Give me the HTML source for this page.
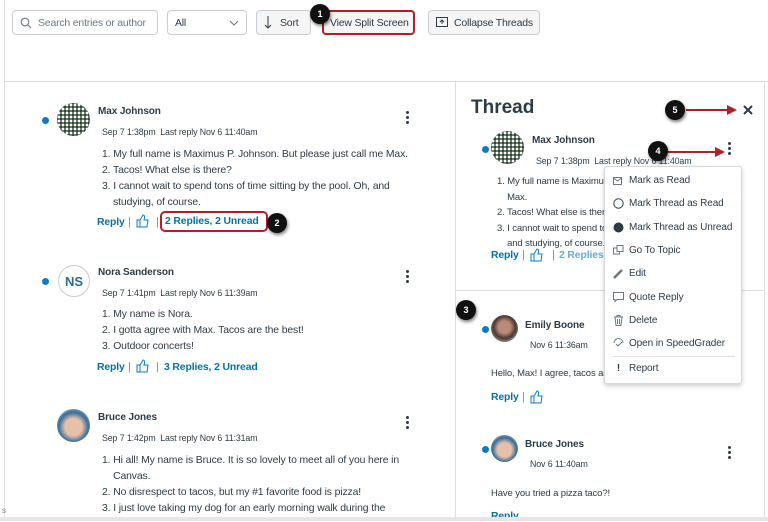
<!DOCTYPE html>
<html><head><meta charset="utf-8"><style>
*{box-sizing:border-box;margin:0;padding:0}
body{width:768px;height:521px;position:relative;overflow:hidden;background:#fff;font-family:"Liberation Sans",sans-serif;color:#2d3b45}
.a{position:absolute;white-space:nowrap}
.btn{position:absolute;top:10px;height:25px;border:1px solid #c7cdd1;border-radius:4px;background:#f5f5f5;font-size:10.5px;letter-spacing:-0.2px;color:#2d3b45;display:flex;align-items:center;padding:0 7px;white-space:nowrap;overflow:hidden}
.btn svg{flex-shrink:0}
.name{font-size:10px;font-weight:bold;color:#2d3b45;letter-spacing:-0.1px}
.date{font-size:8.8px;color:#2d3b45;letter-spacing:-0.1px}
.body{font-size:10.4px;line-height:16px;color:#2d3b45;letter-spacing:-0.12px}
.link{font-size:10.4px;font-weight:bold;color:#0770a3;letter-spacing:-0.12px}
.dot{position:absolute;width:7px;height:7px;border-radius:50%;background:#0b7bc5}
.kebab{position:absolute;width:3px}
.kebab i{display:block;width:3px;height:3px;border-radius:50%;background:#2d3b45;margin-bottom:2px}
.badge{position:absolute;width:20px;height:20px;border-radius:50%;background:#111;color:#fff;font-size:9px;font-weight:bold;display:flex;align-items:center;justify-content:center;box-shadow:1px 2px 3px rgba(0,0,0,.5);z-index:3}
.av{position:absolute;border-radius:50%}
.mi{position:absolute;left:8px;font-size:10px;letter-spacing:-0.1px;color:#2d3b45;display:flex;align-items:center;gap:5px;white-space:nowrap}
.mi svg{width:11px;height:11px;flex-shrink:0}
</style></head><body>
<div class="a" style="left:4px;top:0;width:1px;height:521px;background:#ddd"></div>
<div class="a" style="left:5px;top:81px;width:763px;height:1px;background:#ddd"></div>
<div class="a" style="left:455px;top:82px;width:1px;height:436px;background:#ddd"></div>
<div class="a" style="left:764px;top:82px;width:1px;height:436px;background:#ddd"></div>
<div class="a" style="left:456px;top:290px;width:308px;height:1px;background:#ddd"></div>

<div class="btn" style="left:12px;width:146px;background:#fff;color:#6b7780"><svg width="12" height="12" viewBox="0 0 12 12" style="margin-right:6px"><circle cx="5" cy="5" r="3.8" fill="none" stroke="#6b7780" stroke-width="1.1"/><path d="M8 8l3 3" stroke="#6b7780" stroke-width="1.1"/></svg>Search entries or author</div>
<div class="btn" style="left:167px;width:80px;background:#fff;justify-content:space-between">All<svg width="10" height="6" viewBox="0 0 10 6"><path d="M1 1l4 4 4-4" fill="none" stroke="#6b7780"/></svg></div>
<div class="btn" style="left:256px;width:55px"><svg width="8" height="13" viewBox="0 0 8 13" style="margin-right:8px"><path d="M4 0v12M1 9l3 3 3-3" fill="none" stroke="#2d3b45"/></svg>Sort</div>
<div class="btn" style="left:322px;width:93px;border:2px solid #b0202b;padding:0 0 0 6px">View Split Screen</div>
<div class="btn" style="left:428px;width:112px"><svg width="12" height="11" viewBox="0 0 12 11" style="margin-right:6px"><rect x="0.5" y="0.5" width="11" height="9" fill="none" stroke="#2d3b45"/><path d="M6 7V3M4 5l2-2 2 2" fill="none" stroke="#2d3b45"/></svg>Collapse Threads</div>
<div class="badge" style="left:310px;top:4px">1</div>

<div class="dot" style="left:42px;top:117px"></div>
<div class="av" style="left:57px;top:103px;width:33px;height:33px;background:radial-gradient(circle,#fff 1.2px,#2f4a34 1.6px) 0 0/4px 4px"></div>
<div class="a name" style="left:98px;top:106px">Max Johnson</div>
<div class="kebab" style="left:406px;top:111px"><i></i><i></i><i></i></div>
<div class="a date" style="left:102px;top:127px">Sep 7 1:38pm&nbsp; Last reply Nov 6 11:40am</div>
<div class="a body" style="left:102px;top:147px">1. My full name is Maximus P. Johnson. But please just call me Max.<br>2. Tacos! What else is there?<br>3. I cannot wait to spend tons of time sitting by the pool. Oh, and<br>&nbsp;&nbsp;&nbsp;&nbsp;studying, of course.</div>
<div class="a link" style="left:97px;top:217px">Reply</div>
<div class="a" style="left:128px;top:216px;font-size:11px;color:#888">|</div>
<svg class="a" style="left:136px;top:214px" width="13" height="14" viewBox="0 0 13 14"><path d="M1 6h3v7H1zM4 6l3-5c1 0 2 1 1.5 3L8 6h4l-1 7H4" fill="none" stroke="#0b7bc5"/></svg>
<div class="a" style="left:156px;top:216px;font-size:11px;color:#888">|</div>
<div class="a link" style="left:160px;top:211px;width:108px;height:21px;border:2px solid #b0202b;border-radius:5px;padding:3px 0 0 3px">2 Replies, 2 Unread</div>
<div class="badge" style="left:267px;top:213px">2</div>

<div class="dot" style="left:42px;top:278px"></div>
<div class="av" style="left:58px;top:265px;width:32px;height:32px;border:1px solid #c7cdd1;background:#fff;color:#2d6b9a;font-weight:bold;font-size:13px;display:flex;align-items:center;justify-content:center">NS</div>
<div class="a name" style="left:98px;top:267px">Nora Sanderson</div>
<div class="kebab" style="left:406px;top:270px"><i></i><i></i><i></i></div>
<div class="a date" style="left:102px;top:288px">Sep 7 1:41pm&nbsp; Last reply Nov 6 11:39am</div>
<div class="a body" style="left:102px;top:307px">1. My name is Nora.<br>2. I gotta agree with Max. Tacos are the best!<br>3. Outdoor concerts!</div>
<div class="a link" style="left:97px;top:362px">Reply</div>
<div class="a" style="left:128px;top:361px;font-size:11px;color:#888">|</div>
<svg class="a" style="left:136px;top:359px" width="13" height="14" viewBox="0 0 13 14"><path d="M1 6h3v7H1zM4 6l3-5c1 0 2 1 1.5 3L8 6h4l-1 7H4" fill="none" stroke="#0b7bc5"/></svg>
<div class="a" style="left:156px;top:361px;font-size:11px;color:#888">|</div>
<div class="a link" style="left:164px;top:362px">3 Replies, 2 Unread</div>

<div class="av" style="left:57px;top:409px;width:33px;height:33px;background:radial-gradient(circle at 50% 55%,#e7c0a8 35%,#3a6f9a 60%,#cfd8de)"></div>
<div class="a name" style="left:98px;top:412px">Bruce Jones</div>
<div class="kebab" style="left:406px;top:416px"><i></i><i></i><i></i></div>
<div class="a date" style="left:102px;top:433px">Sep 7 1:42pm&nbsp; Last reply Nov 6 11:31am</div>
<div class="a body" style="left:102px;top:453px">1. Hi all! My name is Bruce. It is so lovely to meet all of you here in<br>&nbsp;&nbsp;&nbsp;&nbsp;Canvas.<br>2. No disrespect to tacos, but my #1 favorite food is pizza!<br>3. I just love taking my dog for an early morning walk during the</div>

<div class="a" style="left:471px;top:97px;font-size:19px;font-weight:bold;color:#2d3b45">Thread</div>
<div class="badge" style="left:665px;top:100px">5</div>
<div class="a" style="left:686px;top:109px;width:44px;height:2px;background:#b0202b"></div>
<svg class="a" style="left:727px;top:105px" width="10" height="10"><path d="M0 0L10 5 0 10z" fill="#b0202b"/></svg>
<svg class="a" style="left:743px;top:105px" width="10" height="10"><path d="M1 1l8 8M9 1l-8 8" stroke="#2d3b45" stroke-width="2"/></svg>

<div class="dot" style="left:482px;top:146px"></div>
<div class="av" style="left:491px;top:131px;width:33px;height:33px;background:radial-gradient(circle,#fff 1.2px,#2f4a34 1.6px) 0 0/4px 4px"></div>
<div class="a name" style="left:532px;top:135px">Max Johnson</div>
<div class="a date" style="left:536px;top:156px">Sep 7 1:38pm&nbsp; Last reply Nov 6 11:40am</div>
<div class="badge" style="left:648px;top:141px">4</div>
<div class="a" style="left:668px;top:151px;width:50px;height:2px;background:#b0202b"></div>
<svg class="a" style="left:715px;top:147px" width="10" height="10"><path d="M0 0L10 5 0 10z" fill="#b0202b"/></svg>
<div class="kebab" style="left:728px;top:142px"><i></i><i></i><i></i></div>
<div class="a body" style="left:497px;top:174px;font-size:9.5px;line-height:15.5px">1. My full name is Maximus P.<br>&nbsp;&nbsp;&nbsp;&nbsp;Max.<br>2. Tacos! What else is there?<br>3. I cannot wait to spend tons<br>&nbsp;&nbsp;&nbsp;&nbsp;and studying, of course.</div>
<div class="a link" style="left:491px;top:250px">Reply</div>
<div class="a" style="left:522px;top:249px;font-size:11px;color:#888">|</div>
<svg class="a" style="left:530px;top:248px" width="13" height="14" viewBox="0 0 13 14"><path d="M1 6h3v7H1zM4 6l3-5c1 0 2 1 1.5 3L8 6h4l-1 7H4" fill="none" stroke="#0b7bc5"/></svg>
<div class="a" style="left:552px;top:249px;font-size:11px;color:#888">|</div>
<div class="a link" style="left:559px;top:250px;color:#6ea9cf">2 Replies,</div>

<div class="badge" style="left:456px;top:300px">3</div>
<div class="dot" style="left:482px;top:326px"></div>
<div class="av" style="left:491px;top:315px;width:27px;height:27px;background:radial-gradient(circle at 50% 45%,#b98c78 30%,#4a3a33 55%,#ddd)"></div>
<div class="a name" style="left:525px;top:320px">Emily Boone</div>
<div class="a date" style="left:530px;top:340px">Nov 6 11:36am</div>
<div class="a body" style="left:491px;top:366px;font-size:9.5px">Hello, Max! I agree, tacos are</div>
<div class="a link" style="left:491px;top:392px">Reply</div>
<div class="a" style="left:522px;top:391px;font-size:11px;color:#888">|</div>
<svg class="a" style="left:530px;top:390px" width="13" height="14" viewBox="0 0 13 14"><path d="M1 6h3v7H1zM4 6l3-5c1 0 2 1 1.5 3L8 6h4l-1 7H4" fill="none" stroke="#0b7bc5"/></svg>

<div class="dot" style="left:482px;top:446px"></div>
<div class="av" style="left:491px;top:435px;width:27px;height:27px;background:radial-gradient(circle at 50% 55%,#e7c0a8 35%,#3a6f9a 60%,#cfd8de)"></div>
<div class="a name" style="left:525px;top:439px">Bruce Jones</div>
<div class="kebab" style="left:728px;top:446px"><i></i><i></i><i></i></div>
<div class="a date" style="left:530px;top:459px">Nov 6 11:40am</div>
<div class="a body" style="left:491px;top:486px;font-size:9.5px">Have you tried a pizza taco?!</div>
<div class="a link" style="left:491px;top:511px">Reply</div>

<div class="a" style="left:604px;top:166px;width:138px;height:218px;background:#fff;border:1px solid #d4d8db;border-radius:3px;box-shadow:0 2px 5px rgba(0,0,0,.2);z-index:2">
 <div class="mi" style="top:8px"><svg viewBox="0 0 11 11"><rect x=".5" y="2.5" width="8" height="7" fill="none" stroke="#6b7780"/><path d="M.5 3l4 3 4-3" fill="none" stroke="#6b7780"/></svg>Mark as Read</div>
 <div class="mi" style="top:31px"><svg viewBox="0 0 11 11"><circle cx="5.5" cy="5.5" r="4.7" fill="none" stroke="#2d3b45"/></svg>Mark Thread as Read</div>
 <div class="mi" style="top:55px"><svg viewBox="0 0 11 11"><circle cx="5.5" cy="5.5" r="5" fill="#2d3b45"/></svg>Mark Thread as Unread</div>
 <div class="mi" style="top:78px"><svg viewBox="0 0 11 11"><rect x=".5" y="3" width="6" height="6" fill="none" stroke="#6b7780"/><rect x="4" y=".5" width="6" height="6" fill="#fff" stroke="#6b7780"/></svg>Go To Topic</div>
 <div class="mi" style="top:101px"><svg viewBox="0 0 11 11"><path d="M1 10L9 2" stroke="#6b7780" stroke-width="2.5"/></svg>Edit</div>
 <div class="mi" style="top:125px"><svg viewBox="0 0 11 11"><path d="M.5 .5h10v7H4l-2 2v-2H.5z" fill="none" stroke="#6b7780"/></svg>Quote Reply</div>
 <div class="mi" style="top:148px"><svg viewBox="0 0 11 11"><path d="M1 2h9M4 2V.5h3V2M2 2l1 8.5h5L9 2M4.5 4v5M6.5 4v5" fill="none" stroke="#6b7780"/></svg>Delete</div>
 <div class="mi" style="top:171px"><svg viewBox="0 0 11 11"><path d="M1 5a4.5 4.5 0 019 0M3 6l2 2 4-4" fill="none" stroke="#6b7780"/></svg>Open in SpeedGrader</div>
 <div class="a" style="left:8px;top:189px;width:122px;height:1px;background:#ddd"></div>
 <div class="mi" style="top:196px"><span style="font-weight:bold;width:11px;text-align:center">!</span>Report</div>
</div>
<div class="a" style="left:0;top:517px;width:768px;height:4px;background:#e6e6e6;z-index:5"></div>
<div class="a" style="left:2px;top:506px;font-size:8px;color:#888">s</div>
</body></html>
